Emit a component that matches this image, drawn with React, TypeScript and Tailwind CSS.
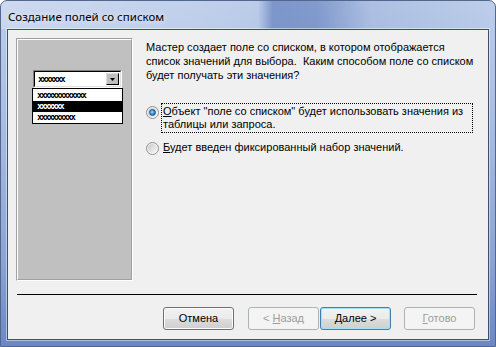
import React from "react";

const F = "font-['Liberation_Sans',Arial,sans-serif]";

function Radio({ checked }: { checked?: boolean }) {
  return (
    <div className="w-[13px] h-[13px] rounded-full border border-[#8e8f8f] bg-[linear-gradient(135deg,#e6e6e6,#ffffff)] flex items-center justify-center shrink-0">
      <div className="w-[9px] h-[9px] rounded-full bg-[linear-gradient(135deg,#c9cacc,#f6f6f6)] flex items-center justify-center">
        {checked && (
          <div className="w-[7px] h-[7px] rounded-full border border-[#1c4f95] bg-[radial-gradient(circle_at_40%_40%,#a8e2ff_0%,#3a98dc_45%,#1a5aa6_100%)]" />
        )}
      </div>
    </div>
  );
}

function Btn({
  children,
  kind = "normal",
  className = "",
}: {
  children: React.ReactNode;
  kind?: "normal" | "disabled" | "default";
  className?: string;
}) {
  const base =
    "h-[23px] w-[71px] rounded-[3px] border flex items-center justify-center text-[11px] leading-none shrink-0 " +
    F +
    " ";
  const k =
    kind === "disabled"
      ? "border-[#adb2b5] bg-[#f4f4f4] text-[#9d9d9d]"
      : kind === "default"
      ? "border-[#3c7fb1] bg-[linear-gradient(180deg,#f2f2f2_0%,#ebebeb_50%,#dddddd_50%,#cfcfcf_100%)] shadow-[inset_0_0_0_1px_#a6e1f7] text-black"
      : "border-[#707070] bg-[linear-gradient(180deg,#f2f2f2_0%,#ebebeb_50%,#dddddd_50%,#cfcfcf_100%)] shadow-[inset_0_0_0_1px_#fbfbfb] text-black";
  return (
    <div className={base + k + " " + className}>
      <span className="whitespace-pre">{children}</span>
    </div>
  );
}

const X = "font-['DejaVu_Sans_Mono',monospace] font-bold text-[9px] tracking-[-1.7px] leading-none";

export default function App() {
  return (
    <div className="w-[496px] h-[347px] rounded-t-[7px] border border-[#52668e] flex flex-col overflow-hidden bg-[linear-gradient(180deg,#bccdea_0%,#a9bde2_35%,#8ba4d4_75%,#6b88c4_100%)]">
      {/* title bar */}
      <div className="h-[28px] shrink-0 flex items-center pl-[7px] pt-[3px] bg-[linear-gradient(90deg,rgba(255,255,255,0.25)_0%,rgba(255,255,255,0.08)_40%,rgba(255,255,255,0)_52%,rgba(50,85,165,0.45)_55%,rgba(50,85,165,0.42)_64%,rgba(50,85,165,0.1)_75%,rgba(255,255,255,0.02)_100%)]">
        <span className="font-['Noto_Sans',sans-serif] text-[11.5px] text-black [text-shadow:0_0_6px_rgba(255,255,255,0.9)]">
          Создание полей со списком
        </span>
      </div>
      {/* client area */}
      <div className="px-[6px] flex-1 flex flex-col">
        <div className="h-[311px] border border-[#3e4e6c] bg-[#f0f0f0] flex flex-col shadow-[0_0_0_1px_rgba(255,255,255,0.45)]">
          <div className="flex pt-[8px] pl-[8px]">
            {/* illustration panel */}
            <div className="w-[117px] h-[243px] border border-t-[#a0a0a0] border-l-[#a0a0a0] border-r-white border-b-white shrink-0">
              <div className="w-full h-full border border-t-white border-l-white border-r-[#a0a0a0] border-b-[#a0a0a0] bg-[#c0c0c0] pt-[30px] pl-[14px]">
                <div className="w-[91px]">
                  <div className="ml-[1px] w-[89px] h-[18px] border border-t-[#808080] border-l-[#808080] border-r-white border-b-white">
                    <div className="w-full h-full border border-t-black border-l-black border-r-[#dfdfdf] border-b-[#dfdfdf] bg-white flex items-center pl-[3px] pr-[1px]">
                      <span className={X + " text-black flex-1"}>xxxxxxx</span>
                      <div className="w-[13px] h-[12px] bg-[#c0c0c0] border border-t-[#dfdfdf] border-l-[#dfdfdf] border-r-black border-b-black flex items-center justify-center">
                        <svg width="5" height="3" viewBox="0 0 5 3">
                          <path d="M0 0H5L2.5 3Z" fill="#000" />
                        </svg>
                      </div>
                    </div>
                  </div>
                  <div className="h-[36px] border border-black bg-white flex flex-col">
                    <div className="h-[12px] flex items-center pl-[4px]">
                      <span className={X + " text-black"}>xxxxxxxxxxxxx</span>
                    </div>
                    <div className="h-[11px] flex items-center pl-[4px] bg-black">
                      <span className={X + " text-white"}>xxxxxxx</span>
                    </div>
                    <div className="h-[11px] flex items-center pl-[4px]">
                      <span className={X + " text-black"}>xxxxxxxxxx</span>
                    </div>
                  </div>
                </div>
              </div>
            </div>
            {/* text column */}
            <div className={"ml-[13px] flex flex-col text-[11px] text-black " + F}>
              <p className="mt-[2px] leading-[14px] whitespace-pre">
                {"Мастер создает поле со списком, в котором отображается\nсписок значений для выбора.  Каким способом поле со списком\nбудет получать эти значения?"}
              </p>
              <div className="mt-[21px] flex items-start">
                <div className="mt-[3px]">
                  <Radio checked />
                </div>
                <div className="ml-[2px] w-[312px] border border-dotted border-black px-[1px] py-[1px] leading-[13px]">
                  <span className="underline">О</span>бъект "поле со списком" будет использовать значения из
                  <br />
                  таблицы или запроса.
                </div>
              </div>
              <div className="mt-[6px] flex items-start">
                <div className="mt-[3px]">
                  <Radio />
                </div>
                <div className="ml-[2px] border border-transparent px-[1px] py-[1px] leading-[13px]">
                  <span className="underline">Б</span>удет введен фиксированный набор значений.
                </div>
              </div>
            </div>
          </div>
          <div className="mt-[13px] ml-[9px] w-[460px] h-px bg-black" />
          <div className="mt-[12px] ml-[155px] flex">
            <Btn>Отмена</Btn>
            <Btn kind="disabled" className="ml-[14px]">
              {"< "}
              <span className="underline">Н</span>азад
            </Btn>
            <Btn kind="default" className="ml-[1px]">
              <span className="underline">Д</span>
              {"алее >"}
            </Btn>
            <Btn kind="disabled" className="ml-[13px]">
              <span className="underline">Г</span>отово
            </Btn>
          </div>
        </div>
      </div>
    </div>
  );
}
